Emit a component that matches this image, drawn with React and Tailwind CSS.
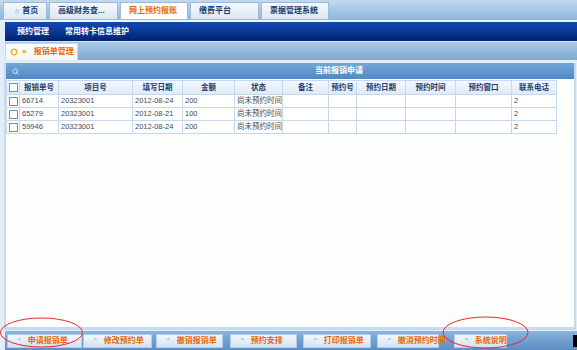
import { Search } from 'lucide-react';

const topTabs = [
  { label: '首页', w: 'w-[44px]', home: true },
  { label: '高级财务查...', w: 'w-[69px]' },
  { label: '网上预约报账', w: 'w-[68px]', active: true },
  { label: '缴费平台', w: 'w-[69px]' },
  { label: '票据管理系统', w: 'w-[68px]' },
];

const cols = [
  { label: '', w: 'w-[13px]' },
  { label: '报销单号', w: 'w-[39px]' },
  { label: '项目号', w: 'w-[74px]' },
  { label: '填写日期', w: 'w-[50px]' },
  { label: '金额', w: 'w-[52px]' },
  { label: '状态', w: 'w-[45px]' },
  { label: '备注', w: 'w-[46px]' },
  { label: '预约号', w: 'w-[28px]' },
  { label: '预约日期', w: 'w-[49px]' },
  { label: '预约时间', w: 'w-[50px]' },
  { label: '预约窗口', w: 'w-[56px]' },
  { label: '联系电话', w: 'w-[45px]' },
];

const rows = [
  ['66714', '20323001', '2012-08-24', '200', '尚未预约时间', '', '', '', '', '', '2'],
  ['65279', '20323001', '2012-08-21', '100', '尚未预约时间', '', '', '', '', '', '2'],
  ['59946', '20323001', '2012-08-24', '200', '尚未预约时间', '', '', '', '', '', '2'],
];

const buttons = [
  { label: '申请报销单', cls: 'ml-[2px] w-[75px]' },
  { label: '修改预约单', cls: 'ml-[1px] w-[69px]' },
  { label: '撤销报销单', cls: 'ml-[4px] w-[67px]' },
  { label: '预约安排', cls: 'ml-[7px] w-[67px]' },
  { label: '打印报销单', cls: 'ml-[6px] w-[68px]' },
  { label: '撤消预约时间', cls: 'ml-[6px] w-[62px]' },
  { label: '系统说明', cls: 'ml-[15px] w-[53px]' },
];

function Checkbox() {
  return <div className="w-[9px] h-[9px] border border-[#6f8fb3] bg-white mx-auto" />;
}

export default function App() {
  return (
    <div
      className="relative w-[577px] h-[350px] overflow-hidden bg-[#e3edf7] flex flex-col"
      style={{ fontFamily: '"Liberation Sans", "Noto Sans CJK SC", sans-serif' }}
    >
      {/* top system tabs */}
      <div className="h-[22px] flex items-start gap-[2px] pl-[3px] pt-[2px] bg-gradient-to-b from-[#c2daef] via-[#a6c6e5] to-[#8fb6dc] border-b-2 border-[#eef4fa]">
        {topTabs.map((t) => (
          <div
            key={t.label}
            className={`${t.w} h-[18px] flex items-center gap-[3px] pl-[8px] text-[8px] font-bold border border-[#9bbbdb] ${
              t.active
                ? 'bg-white text-[#e46a0a]'
                : 'bg-gradient-to-b from-[#f6f9fd] to-[#d9e7f4] text-[#203d6c]'
            }`}
          >
            {t.home && <span className="text-[7px] text-[#6b8fbf] ml-[3px]">⌂</span>}
            {t.label}
          </div>
        ))}
      </div>

      {/* navy menu bar */}
      <div className="ml-[5px] h-[19px] flex items-center gap-[16px] pl-[12px] text-[8px] font-bold text-white bg-gradient-to-b from-[#1448b0] via-[#0a3896] to-[#00236c]">
        <span>预约管理</span>
        <span>常用转卡信息维护</span>
      </div>

      {/* page tabs */}
      <div className="ml-[5px] h-[19px] flex items-end bg-gradient-to-b from-[#a9c8e6] to-[#7fa9d4] border-t border-[#d7e6f4]">
        <div className="w-[73px] h-[17px] flex items-center bg-gradient-to-b from-white to-[#f1f6fb] border border-b-0 border-[#c4d8ec]">
          <svg width="8" height="8" viewBox="0 0 8 8" className="ml-[4px]">
            <circle cx="4" cy="4" r="2.8" fill="none" stroke="#f2b200" strokeWidth="1.3" />
            <path d="M0.5 3.5 L2 2 L3 4 Z" fill="#f2b200" />
          </svg>
          <span className="ml-[4px] text-[8px] leading-none text-[#f28c00] font-bold">×</span>
          <span className="ml-[7px] text-[8px] font-bold text-[#e46a0a]">报销单管理</span>
        </div>
      </div>

      {/* main panel */}
      <div className="ml-[4px] mr-[1px] mt-[3px] flex-1 flex flex-col border-x-2 border-[#c6dbef] bg-white">
        <div className="h-[16px] flex items-center bg-gradient-to-b from-[#74a6d8] to-[#5188c4] text-white">
          <Search size={7} strokeWidth={3} className="ml-[6px] text-[#dbe9f7]" />
          <span className="ml-[296px] text-[8px] font-bold">当前报销申请</span>
        </div>
        <div className="flex-1 bg-[#fdfefe] pt-[1px]">
          <table className="table-fixed border-collapse text-[7.5px]">
            <thead>
              <tr className="h-[14px] bg-gradient-to-b from-[#f4f8fd] to-[#dde9f6]">
                {cols.map((c, i) => (
                  <th
                    key={i}
                    className={`${c.w} p-0 border border-[#c4d9ed] text-[#1e3b6b] font-bold text-center`}
                  >
                    {i === 0 ? <Checkbox /> : c.label}
                  </th>
                ))}
              </tr>
            </thead>
            <tbody>
              {rows.map((r, ri) => (
                <tr key={ri} className="h-[13px] bg-white">
                  <td className="p-0 border border-[#c4d9ed]">
                    <Checkbox />
                  </td>
                  {r.map((v, ci) => (
                    <td key={ci} className="p-0 pl-[2px] border border-[#c4d9ed] text-[#404a56] whitespace-nowrap overflow-hidden">
                      {v}
                    </td>
                  ))}
                </tr>
              ))}
            </tbody>
          </table>
        </div>
        <div className="h-[3px] bg-[#c6dbef]" />
      </div>

      {/* bottom button bar */}
      <div className="ml-[5px] mt-[1px] h-[19px] flex items-center bg-gradient-to-b from-[#8cb5de] via-[#709fd0] to-[#5d8ec4]">
        {buttons.map((b) => (
          <div
            key={b.label}
            className={`${b.cls} h-[14px] flex items-center bg-gradient-to-b from-[#f2f7fc] to-[#d3e3f3] border border-[#b3cde8]`}
          >
            <span className="ml-[10px] text-[6px] text-[#6d8fba]">^</span>
            <span className="ml-[7px] text-[8px] font-bold text-[#e46a0a] whitespace-nowrap">{b.label}</span>
          </div>
        ))}
        <div className="ml-auto w-[4px] h-[12px] bg-black" />
      </div>

      {/* red annotation ellipses */}
      <svg className="absolute left-0 top-0 pointer-events-none" width="577" height="350">
        <ellipse cx="41.5" cy="332.5" rx="41" ry="14.5" fill="none" stroke="#e8262a" strokeWidth="1" />
        <ellipse cx="485.5" cy="332.5" rx="42.5" ry="15.5" fill="none" stroke="#e8262a" strokeWidth="1" />
      </svg>
    </div>
  );
}
